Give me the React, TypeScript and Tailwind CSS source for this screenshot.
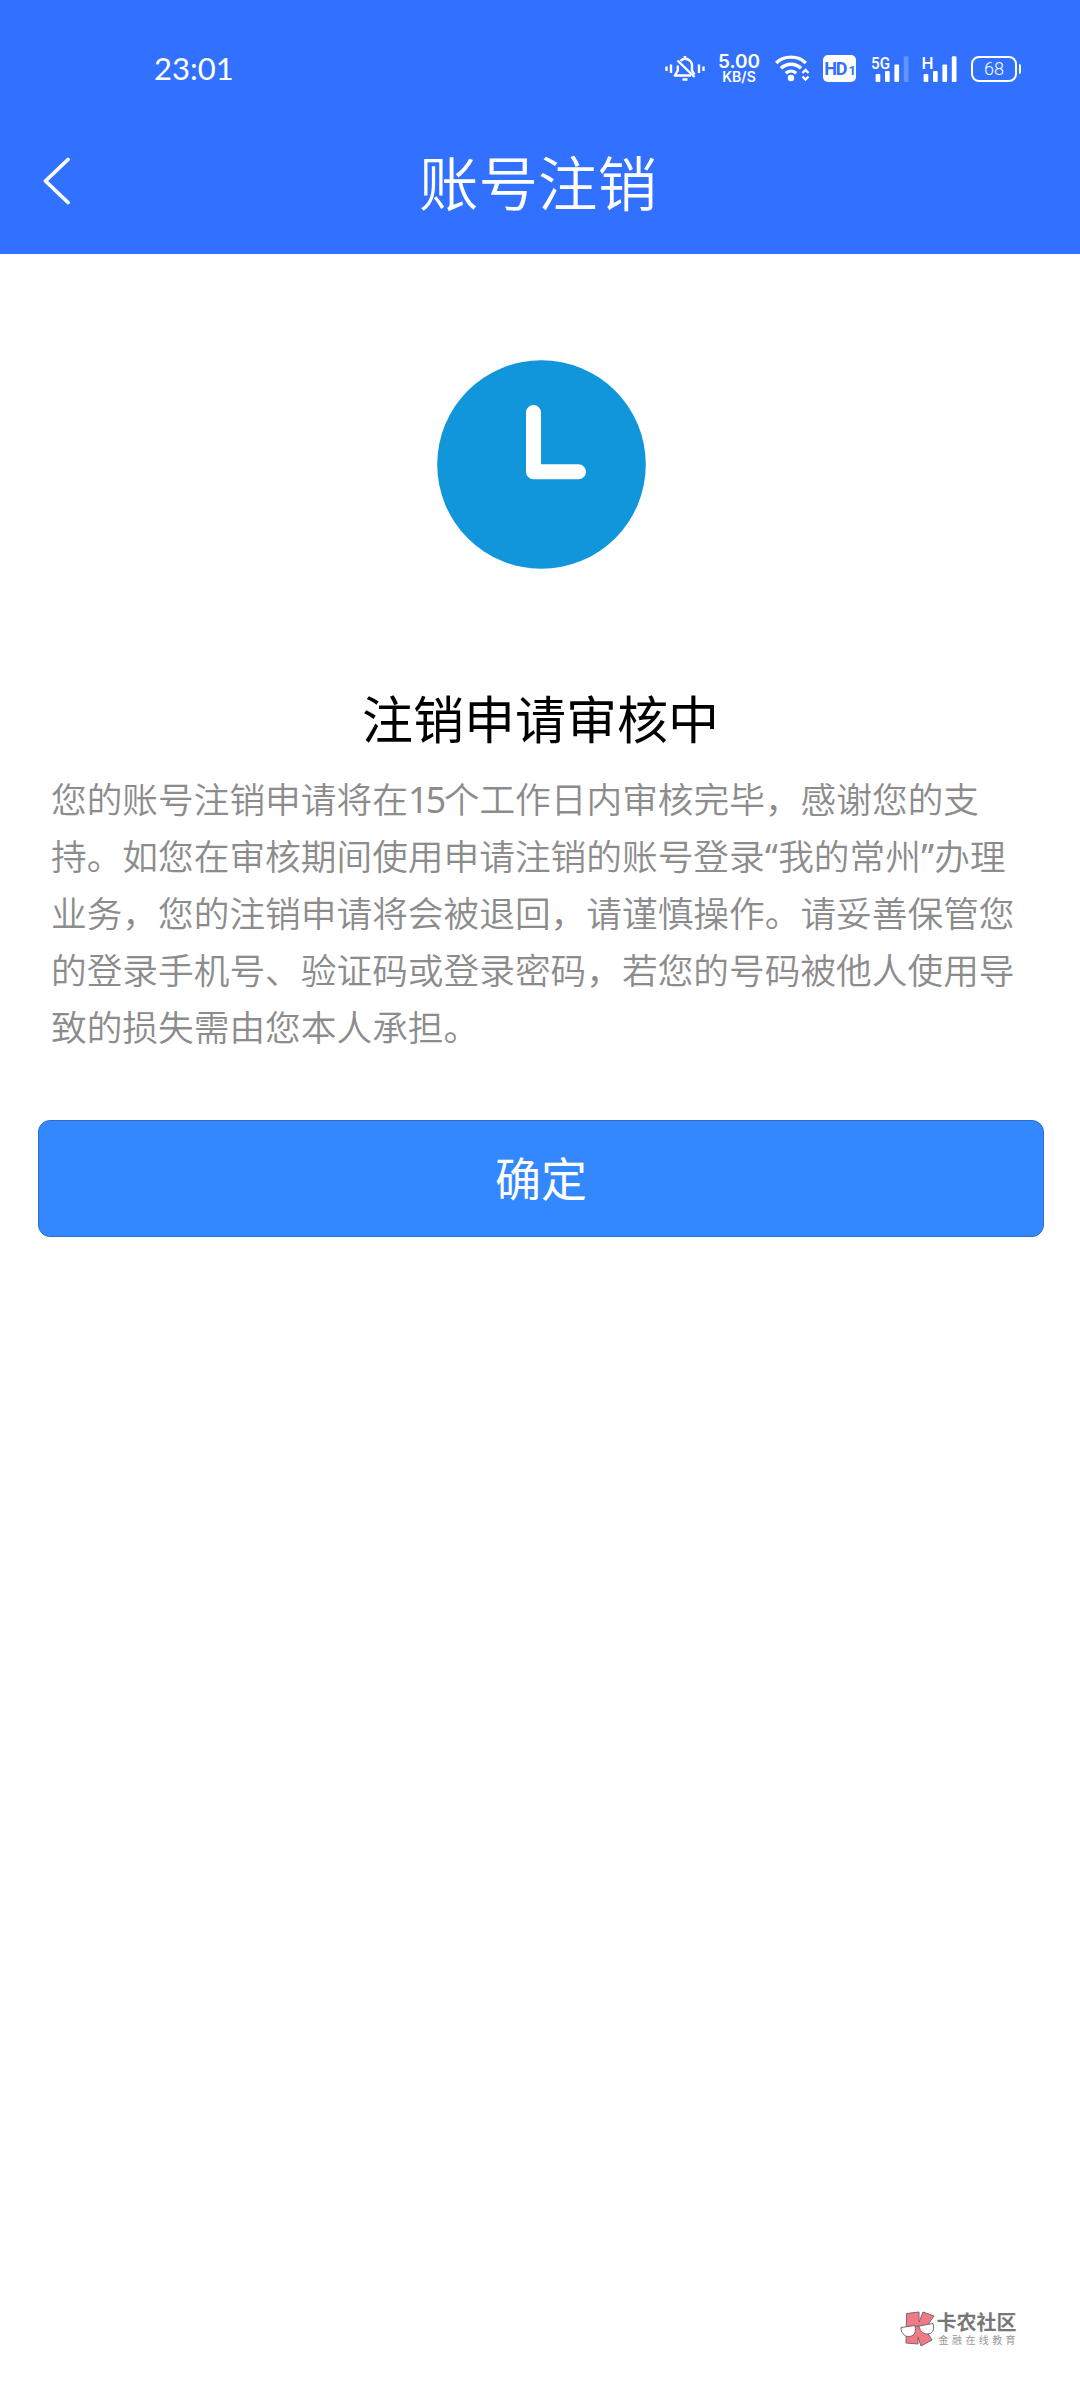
import type { ReactElement } from "react";

const NOTICE_LINES: ReadonlyArray<string> = [
  "您的账号注销申请将在15个工作日内审核完毕\uFF0C感谢您的支",
  "持。如您在审核期间使用申请注销的账号登录“我的常州”办理",
  "业务\uFF0C您的注销申请将会被退回\uFF0C请谨慎操作。请妥善保管您",
  "的登录手机号、验证码或登录密码\uFF0C若您的号码被他人使用导",
  "致的损失需由您本人承担。",
];

const MutedBellIcon = (): ReactElement => (
  <svg width="40" height="30" viewBox="0 0 40 30" fill="none" stroke="#fff">
    <path d="M1.500 12.500v4.500M6 10.500v8.500M34 10.500v8.500M38.500 12.500v4.500" strokeWidth="2.400" />
    <path d="M12.800 11.500v5L9.800 21.500H26M15.500 7C16.800 5.300 18.300 4.800 20 4.800c4 0 7 3 7 6.600v5l2.400 4.200" strokeWidth="2.400" strokeLinejoin="round" />
    <path d="M12.500 6.500L29.500 23" strokeWidth="2.400" />
    <path d="M20 2v3M17.500 25.500h5" strokeWidth="2.600" />
  </svg>
);

const WifiIcon = (): ReactElement => (
  <svg width="35" height="30" viewBox="0 0 35 30" fill="none" stroke="#fff">
    <path d="M1.200 9C9.200 1.200 22.800 1.200 30.800 9" strokeWidth="3.400" />
    <path d="M6 14.300c5.500-5.400 14.500-5.400 20 0" strokeWidth="3.400" />
    <path d="M10.800 19.200c3-2.800 7.400-2.800 10.400 0" strokeWidth="3.400" />
    <circle cx="16" cy="24" r="3.200" fill="#fff" stroke="none" />
    <path d="M27.500 19l3-3 3 3M27.500 22.500l3 3 3-3" strokeWidth="2.400" />
  </svg>
);

const HdBadge = (): ReactElement => (
  <span className="flex h-[27px] w-[33px] items-center justify-center rounded-[5px] bg-white font-['Roboto'] text-[18px] leading-none font-bold tracking-[-1.200px] text-[#3270ff]">
    HD<span className="mt-[4px] ml-[2px] text-[13px]">1</span>
  </span>
);

type SignalIconPropsType = {
  label: string;
  labelX: number;
  labelWidth: number;
  isLastBarFaded?: boolean;
};

const SignalIcon = ({
  label,
  labelX,
  labelWidth,
  isLastBarFaded = false,
}: SignalIconPropsType): ReactElement => (
  <svg width="38" height="30" viewBox="0 0 38 30" fill="#fff" className="overflow-visible">
    <text
      x={labelX}
      y="14.500"
      textLength={labelWidth}
      lengthAdjust="spacingAndGlyphs"
      className="font-['Roboto'] text-[17px] font-medium"
    >
      {label}
    </text>
    <rect x="4.600" y="20" width="4.700" height="8" rx="1" />
    <rect x="14" y="17" width="4.700" height="11" rx="1" />
    <rect x="23.400" y="10.500" width="4.700" height="17.500" rx="1" />
    <rect x="32.800" y="2.200" width="4.700" height="25.800" rx="1" opacity={isLastBarFaded ? 0.25 : 1} />
  </svg>
);

const BatteryIcon = (): ReactElement => (
  <div className="flex items-center gap-[2px]">
    <span className="flex h-[26px] w-[46px] items-center justify-center rounded-[8px] border-[2.500px] border-white font-['Roboto'] text-[18px] leading-none font-light">
      68
    </span>
    <span className="h-[10px] w-[2px] rounded-r-sm bg-white" />
  </div>
);

const StatusBar = (): ReactElement => (
  <div className="flex h-[137px] items-center justify-between pr-[59px] pl-[154px] text-white">
    <span className="font-['Lato'] text-[31px] leading-none">23:01</span>
    <div className="flex items-center">
      <MutedBellIcon />
      <div className="ml-[13px] flex w-[42px] flex-col items-center font-['Inter'] font-semibold">
        <span className="text-[19px] leading-[15px]">5.00</span>
        <span className="mt-[1px] text-[14px] leading-[13px]">KB/S</span>
      </div>
      <div className="ml-[15px]">
        <WifiIcon />
      </div>
      <div className="ml-[13px]">
        <HdBadge />
      </div>
      <div className="ml-[15px]">
        <SignalIcon label="5G" labelX={0} labelWidth={19} isLastBarFaded />
      </div>
      <div className="ml-[10px]">
        <SignalIcon label="H" labelX={2.5} labelWidth={12} />
      </div>
      <div className="ml-[14px]">
        <BatteryIcon />
      </div>
    </div>
  </div>
);

const Header = (): ReactElement => (
  <header className="flex h-[254px] flex-col bg-[#3270ff] text-white">
    <StatusBar />
    <div className="grid h-[88px] grid-cols-[80px_1fr_84px] items-center">
      <button type="button" aria-label="返回" className="pl-[43px]">
        <svg width="29" height="48" viewBox="0 0 29 48" fill="none" stroke="#fff" strokeWidth="3.800" strokeLinecap="round" strokeLinejoin="round">
          <path d="M25 2.500L2.500 24 25 45.500" />
        </svg>
      </button>
      <h1 className="text-center text-[59.500px] leading-none font-[350]">账号注销</h1>
    </div>
  </header>
);

const ClockIcon = (): ReactElement => (
  <svg width="209" height="209" viewBox="0 0 209 209" fill="none">
    <circle cx="104.500" cy="104.500" r="104.300" fill="#1296db" />
    <path d="M96.500 52.500v59.300h45" stroke="#fff" strokeWidth="15" strokeLinecap="round" strokeLinejoin="round" />
  </svg>
);

type NoticeLinePropsType = {
  line: string;
};

// Digits take half an em each, curly quotes a bit less
const NoticeLine = ({ line }: NoticeLinePropsType): ReactElement => (
  <p className="h-[57px]">
    {line.split(/(\d+|[“”])/).map((part, index) => {
      if (/^\d+$/.test(part)) {
        return (
          <span key={index} className="font-['Noto_Sans'] leading-none font-normal tracking-[-2.500px]">
            {part}
          </span>
        );
      }
      if (part === "“" || part === "”") {
        return (
          <span key={index} className="inline-block w-[13.400px] text-center font-['Noto_Sans'] leading-none font-normal">
            {part}
          </span>
        );
      }
      return part;
    })}
  </p>
);

const Watermark = (): ReactElement => (
  <div className="flex items-center self-end pr-[61px] pb-[52px]">
    <svg width="36" height="38" viewBox="0 0 36 38" stroke="#77696b" strokeWidth="1">
      <path d="M6.500 3.500L19 2v10l4-10 11 4-9 13 7 11-11 6-3-9v7l-12-1z" fill="#f27a84" />
      <path d="M1 17.500l14-2c2 8-2 11-6.500 11S1 22.500 1 17.500zM19 16l14-2.500c2 7-1 10.500-6 10.500-4 0-7-3-8-8z" fill="#fff" />
      <path d="M15 16.500l4-.500" />
    </svg>
    <div className="flex flex-col pl-[1px]">
      <span className="text-[20px] leading-[20px] font-bold text-[#777]">卡农社区</span>
      <span className="mt-[2px] pl-[2px] text-[10px] leading-[12px] tracking-[3.400px] text-[#999]">金融在线教育</span>
    </div>
  </div>
);

export default function App(): ReactElement {
  return (
    <div className="flex h-[2400px] w-[1080px] flex-col bg-white font-['Noto_Sans_CJK_SC',sans-serif]">
      <Header />
      <main className="flex flex-1 flex-col">
        <div className="mt-[106px] flex justify-center pl-[2px]">
          <ClockIcon />
        </div>
        <h2 className="mt-[122px] pl-[1px] text-center text-[51px] leading-[52px] text-black">注销申请审核中</h2>
        <div className="mt-[26px] pl-[51px] text-[35.700px] leading-[57px] font-[350] whitespace-nowrap text-[#8c8c8c]">
          {NOTICE_LINES.map((line) => (
            <NoticeLine key={line} line={line} />
          ))}
        </div>
        <button
          type="button"
          className="mt-[66px] ml-[38px] h-[117px] w-[1006px] rounded-[12px] border border-[#2b6fd0] bg-[#3388ff] pb-[5px] text-[46px] leading-none text-white"
        >
          确定
        </button>
      </main>
      <Watermark />
    </div>
  );
}
